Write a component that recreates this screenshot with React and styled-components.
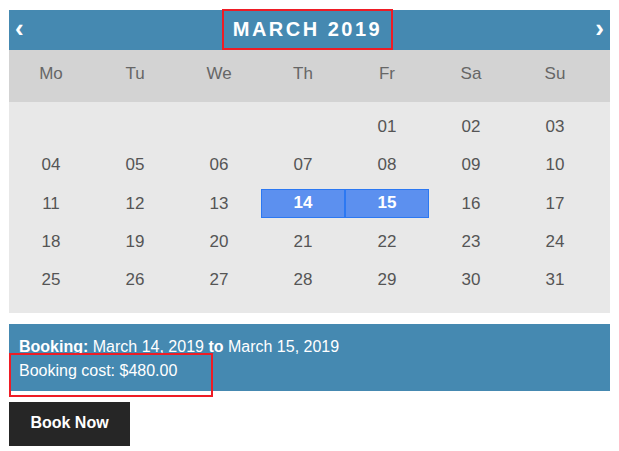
import React from 'react'
import styled, { createGlobalStyle } from 'styled-components'

const Global = createGlobalStyle`
  body {
    margin: 0;
    background: #fff;
    font-family: "Liberation Sans", Arial, sans-serif;
  }
`

const Wrap = styled.div`
  padding: 10px 9px 0 9px;
  width: 601px;
`

const Header = styled.div`
  position: relative;
  height: 40px;
  background: #4589b1;
  display: flex;
  align-items: center;
  justify-content: space-between;
  color: #fff;
`

const Arrow = styled.span`
  font-size: 26px;
  font-weight: bold;
  padding: 0 6px;
  line-height: 1;
  margin-top: -5px;
`

const Title = styled.div`
  position: absolute;
  left: 213px;
  top: -1px;
  width: 171px;
  height: 41px;
  border: 2px solid #ee1c25;
  display: flex;
  align-items: center;
  justify-content: center;
  box-sizing: border-box;
  font-size: 20px;
  font-weight: 600;
  letter-spacing: 2.5px;
`

const Weekdays = styled.div`
  display: grid;
  grid-template-columns: repeat(7, 84px);
  background: #d3d3d3;
  height: 52px;
  padding-bottom: 4px;
  box-sizing: border-box;
  align-items: center;
`

const Weekday = styled.div`
  text-align: center;
  color: #666;
  font-size: 17px;
`

const Body = styled.div`
  display: grid;
  grid-template-columns: repeat(7, 84px);
  grid-auto-rows: 38.3px;
  background: #e8e8e8;
  padding: 6px 0 14px;
`

const Day = styled.div`
  display: flex;
  align-items: center;
  justify-content: center;
  font-size: 17px;
  color: ${p => (p.$sel ? '#fff' : '#555')};
  font-weight: ${p => (p.$sel ? 'bold' : 'normal')};
  background: ${p => (p.$sel ? '#5c90ef' : 'transparent')};
  margin: ${p => (p.$sel ? '4px 0 5px' : '0')};
  border: ${p => (p.$sel ? '1px solid #2c78f2' : 'none')};
`

const Info = styled.div`
  position: relative;
  margin-top: 11px;
  background: #4589b1;
  color: #fff;
  font-size: 16px;
  padding: 11px 10px 11px;
  line-height: 24px;
  height: 45px;
`

const CostBox = styled.div`
  position: absolute;
  left: 0;
  top: 29px;
  width: 200px;
  height: 40px;
  border: 2px solid #ee1c25;
`

const Button = styled.button`
  margin-top: 11px;
  width: 121px;
  height: 44px;
  background: #262626;
  color: #fff;
  border: none;
  font-family: inherit;
  font-weight: bold;
  font-size: 16px;
  padding: 0 0 2px;
`

const days = [
  ['', '', '', '', '01', '02', '03'],
  ['04', '05', '06', '07', '08', '09', '10'],
  ['11', '12', '13', '14', '15', '16', '17'],
  ['18', '19', '20', '21', '22', '23', '24'],
  ['25', '26', '27', '28', '29', '30', '31'],
]

export default function App() {
  return (
    <Wrap>
      <Global />
      <Header>
        <Arrow>‹</Arrow>
        <Title>MARCH 2019</Title>
        <Arrow>›</Arrow>
      </Header>
      <Weekdays>
        {['Mo', 'Tu', 'We', 'Th', 'Fr', 'Sa', 'Su'].map(d => (
          <Weekday key={d}>{d}</Weekday>
        ))}
      </Weekdays>
      <Body>
        {days.flat().map((d, i) => (
          <Day key={i} $sel={d === '14' || d === '15'}>{d}</Day>
        ))}
      </Body>
      <Info>
        <div><b>Booking:</b> March 14, 2019 <b>to</b> March 15, 2019</div>
        <div>Booking cost: $480.00</div>
        <CostBox />
      </Info>
      <Button>Book Now</Button>
    </Wrap>
  )
}
